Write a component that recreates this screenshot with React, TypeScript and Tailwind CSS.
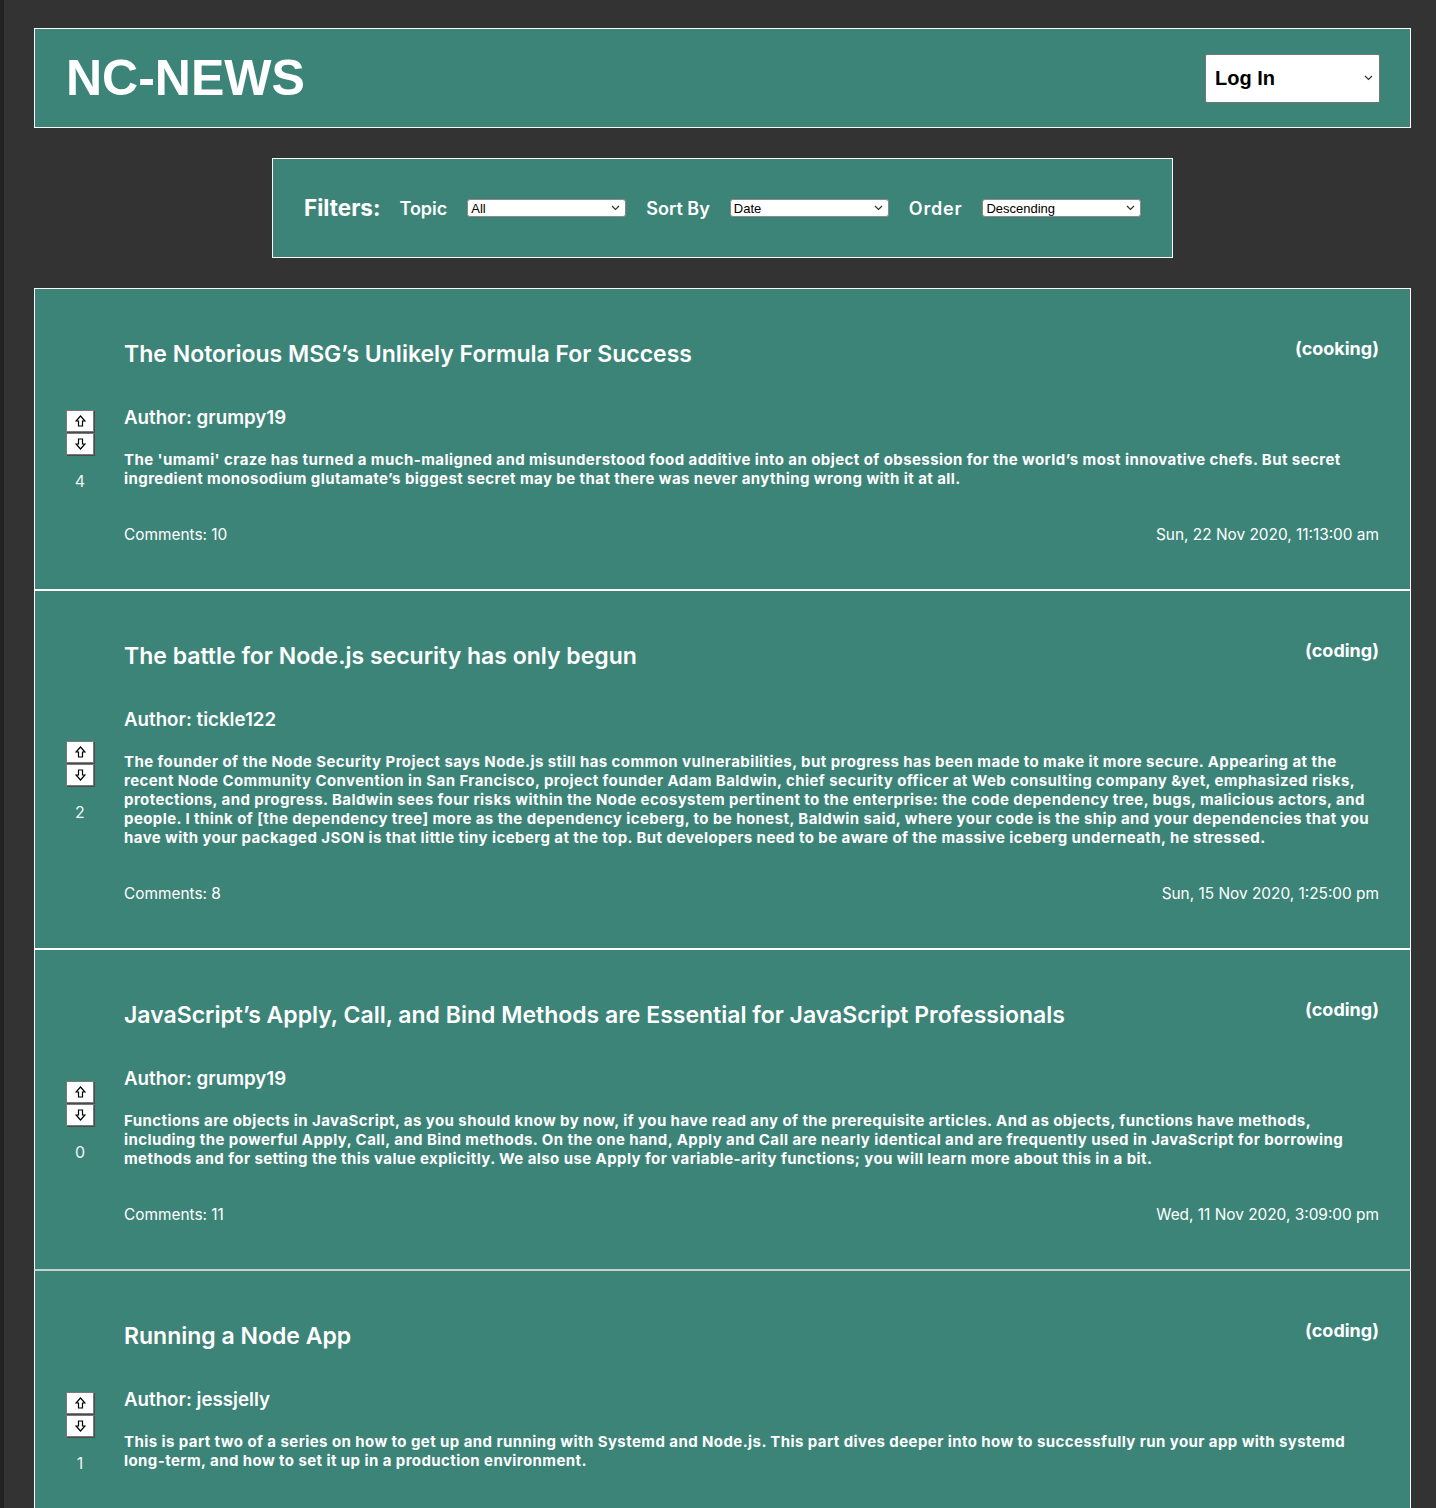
import { ReactNode } from "react";

type Article = {
  title: string;
  topic: string;
  author: string;
  body: string;
  comments: number;
  date: string;
  votes: number;
};

const articles: Article[] = [
  {
    title: "The Notorious MSG’s Unlikely Formula For Success",
    topic: "cooking",
    author: "grumpy19",
    body: "The 'umami' craze has turned a much-maligned and misunderstood food additive into an object of obsession for the world’s most innovative chefs. But secret ingredient monosodium glutamate’s biggest secret may be that there was never anything wrong with it at all.",
    comments: 10,
    date: "Sun, 22 Nov 2020, 11:13:00 am",
    votes: 4,
  },
  {
    title: "The battle for Node.js security has only begun",
    topic: "coding",
    author: "tickle122",
    body: "The founder of the Node Security Project says Node.js still has common vulnerabilities, but progress has been made to make it more secure. Appearing at the recent Node Community Convention in San Francisco, project founder Adam Baldwin, chief security officer at Web consulting company &yet, emphasized risks, protections, and progress. Baldwin sees four risks within the Node ecosystem pertinent to the enterprise: the code dependency tree, bugs, malicious actors, and people. I think of [the dependency tree] more as the dependency iceberg, to be honest, Baldwin said, where your code is the ship and your dependencies that you have with your packaged JSON is that little tiny iceberg at the top. But developers need to be aware of the massive iceberg underneath, he stressed.",
    comments: 8,
    date: "Sun, 15 Nov 2020, 1:25:00 pm",
    votes: 2,
  },
  {
    title: "JavaScript’s Apply, Call, and Bind Methods are Essential for JavaScript Professionals",
    topic: "coding",
    author: "grumpy19",
    body: "Functions are objects in JavaScript, as you should know by now, if you have read any of the prerequisite articles. And as objects, functions have methods, including the powerful Apply, Call, and Bind methods. On the one hand, Apply and Call are nearly identical and are frequently used in JavaScript for borrowing methods and for setting the this value explicitly. We also use Apply for variable-arity functions; you will learn more about this in a bit.",
    comments: 11,
    date: "Wed, 11 Nov 2020, 3:09:00 pm",
    votes: 0,
  },
  {
    title: "Running a Node App",
    topic: "coding",
    author: "jessjelly",
    body: "This is part two of a series on how to get up and running with Systemd and Node.js. This part dives deeper into how to successfully run your app with systemd long-term, and how to set it up in a production environment.",
    comments: 8,
    date: "Sat, 07 Nov 2020, 10:12:00 am",
    votes: 1,
  },
];

const Chevron = () => (
  <svg width="9" height="6" viewBox="0 0 9 6" fill="none" className="shrink-0">
    <path d="M1 1l3.5 3.5L8 1" stroke="#333" strokeWidth="1.2" />
  </svg>
);

const FakeSelect = ({ value }: { value: string }) => (
  <div className="flex shrink-0 items-center justify-between w-[159px] h-[18px] bg-white border border-[#8a8a8a] rounded-[3px] pl-[3px] pr-[5px] font-['Liberation_Sans',Arial,sans-serif] text-[13px] leading-none text-black">
    <span>{value}</span>
    <Chevron />
  </div>
);

const Arrow = ({ down }: { down?: boolean }) => (
  <svg width="11" height="12" viewBox="0 0 11 12" fill="none" className={down ? "rotate-180" : ""}>
    <path d="M5.5 1L10 6H7.5V11H3.5V6H1Z" stroke="#000" strokeWidth="1.2" strokeLinejoin="miter" />
  </svg>
);

const VoteButton = ({ children }: { children: ReactNode }) => (
  <button className="flex items-center justify-center w-[28px] h-[22px] bg-white border border-[#7a7a7a] shadow-[1px_1px_0_#4a4a4a]">
    {children}
  </button>
);

const ArticleCard = ({
  article,
  lightTop,
  lightBottom,
}: {
  article: Article;
  lightTop?: boolean;
  lightBottom?: boolean;
}) => (
  <div
    className={`flex items-center gap-[30px] border border-white bg-[#3d8478] pl-[31px] pr-[31px] pt-[50px] pb-[45px] ${
      lightTop ? "border-t-[#c6d1cd]" : ""
    } ${lightBottom ? "border-b-[#c6d1cd]" : ""}`}
  >
    <div className="flex flex-col items-center w-[28px] shrink-0 mt-[20px]">
      <VoteButton>
        <Arrow />
      </VoteButton>
      <div className="h-[1px]" />
      <VoteButton>
        <Arrow down />
      </VoteButton>
      <span className="mt-[14px] text-[16px] leading-[24px] text-white/95">{article.votes}</span>
    </div>
    <div className="flex-1 min-w-0 text-white">
      <div className="flex justify-between items-start">
        <h2 className="text-[23px] leading-[30px] font-semibold">{article.title}</h2>
        <span className="-mt-[2px] text-[18px] leading-[24px] font-bold">({article.topic})</span>
      </div>
      <h3 className="mt-[37px] text-[18.7px] leading-[24px] font-semibold">Author: {article.author}</h3>
      <p className="mt-[20px] text-[15px] leading-[19px] font-bold tracking-[0.42px]">{article.body}</p>
      <div className="mt-[37px] flex justify-between text-[15.4px] leading-[19px]">
        <span>Comments: {article.comments}</span>
        <span>{article.date}</span>
      </div>
    </div>
  </div>
);

const App = () => {
  return (
    <div className="flex min-h-screen bg-[#333333] font-['Inter',sans-serif]">
      <div className="w-[4px] shrink-0 bg-[#222222]" />
      <div className="flex-1 flex flex-col pl-[30px] pr-[25px] pt-[28px]">
        <header className="flex items-center justify-between h-[100px] border border-white bg-[#3d8478] pl-[31px] pr-[30px]">
          <h1 className="font-['Liberation_Sans',Arial,sans-serif] text-[50px] leading-none font-bold text-white">
            NC-NEWS
          </h1>
          <div className="flex items-center justify-between w-[175px] h-[49px] bg-white border border-[#767676] rounded-[2px] pl-[9px] pr-[6px] font-['Liberation_Sans',Arial,sans-serif] text-[20px] font-bold text-black">
            <span>Log In</span>
            <Chevron />
          </div>
        </header>

        <div className="self-center mt-[30px] flex items-center gap-[20px] w-[901px] h-[100px] border border-white bg-[#3d8478] px-[31px] text-white whitespace-nowrap">
          <span className="text-[22.5px] font-bold">Filters:</span>
          <span className="text-[18px] font-semibold -ml-[1px]">Topic</span>
          <FakeSelect value="All" />
          <span className="text-[18px] font-semibold">Sort By</span>
          <FakeSelect value="Date" />
          <span className="text-[18px] font-semibold tracking-[0.8px]">Order</span>
          <FakeSelect value="Descending" />
        </div>

        <div className="mt-[30px] flex flex-col">
          {articles.map((article, i) => (
            <ArticleCard key={i} article={article} lightTop={i === 3} lightBottom={i === 2} />
          ))}
        </div>
      </div>
    </div>
  );
};

export default App;
